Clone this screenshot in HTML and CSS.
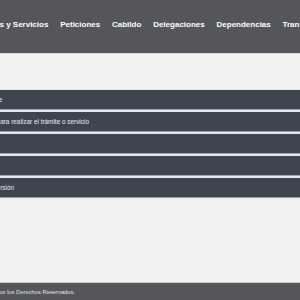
FILE: index.html
```html
<!DOCTYPE html>
<html lang="es">
<head>
<meta charset="utf-8">
<link rel="stylesheet" href="styles.css">
</head>
<body>
<div class="page">
  <header class="topbar">
    <nav class="nav">
      <a class="nav-item">Trámites y Servicios</a>
      <a class="nav-item">Peticiones</a>
      <a class="nav-item">Cabildo</a>
      <a class="nav-item">Delegaciones</a>
      <a class="nav-item">Dependencias</a>
      <a class="nav-item">Transparencia</a>
    </nav>
  </header>
  <main class="content">
    <div class="panels">
      <div class="panel"><span class="panel-title">Responsable</span></div>
      <div class="panel"><span class="panel-title">Requisitos para realizar el trámite o servicio</span></div>
      <div class="panel"><span class="panel-title">&nbsp;</span></div>
      <div class="panel"><span class="panel-title">&nbsp;</span></div>
      <div class="panel"><span class="panel-title">Fecha de versión</span></div>
    </div>
  </main>
  <footer class="footer">
    <span class="footer-text">Todos los Derechos Reservados.</span>
  </footer>
</div>
</body>
</html>
```
FILE: styles.css
```css
html, body {
  margin: 0;
  padding: 0;
  background: #f2f2f2;
  font-family: "Liberation Sans", Arial, sans-serif;
  overflow: hidden;
}
.page {
  width: 300px;
  height: 300px;
  display: flex;
  flex-direction: column;
  overflow: hidden;
}
.topbar {
  height: 54px;
  background: #55565b;
  border-bottom: 1px solid #d9d9db;
  display: flex;
  align-items: center;
  padding-bottom: 5px;
  box-sizing: border-box;
  flex-shrink: 0;
}
.nav {
  display: flex;
  gap: 11.8px;
  margin-left: -29px;
  white-space: nowrap;
}
.nav-item {
  color: #ffffff;
  font-weight: bold;
  font-size: 8px;
}
.content {
  flex: 1;
  padding-top: 36px;
}
.panels {
  display: flex;
  flex-direction: column;
  gap: 2px;
  background: #f2f2f2;
}
.panel {
  height: 19px;
  background: #3d4650;
  border-bottom: 1px solid #9aa2ad;
  box-shadow: 0 1px 0 #e3e8f0, 0 -1px 0 #e3e8f0;
  display: flex;
  align-items: center;
  overflow: hidden;
}
.panel-title {
  color: #e8ebef;
  font-size: 6.4px;
  margin-left: -35px;
  white-space: nowrap;
}
.footer {
  height: 17px;
  background: #55575b;
  border-top: 1px solid #c9c9cb;
  display: flex;
  align-items: center;
  flex-shrink: 0;
  overflow: hidden;
}
.footer-text {
  color: #e0e0e2;
  font-size: 5.8px;
  margin-left: -10px;
  white-space: nowrap;
}
```
